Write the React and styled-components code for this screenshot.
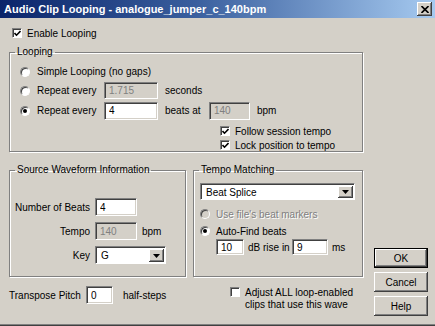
import styled, { createGlobalStyle } from "styled-components";

const GlobalStyle = createGlobalStyle`
  body {
    margin: 0;
    background: #d4d0c8;
    font-family: "Liberation Sans", Arial, sans-serif;
    font-size: 10px;
    color: #000;
  }
`;

const Window = styled.div`
  width: 435px;
  height: 326px;
  box-sizing: border-box;
  display: flex;
  flex-direction: column;
  background: #d4d0c8;
  border-bottom: 1px solid #404040;
  box-shadow: inset 0 -1px #808080;
`;

const TitleBar = styled.div`
  height: 18px;
  flex-shrink: 0;
  display: flex;
  align-items: center;
  padding: 0 3px 0 4px;
  background: linear-gradient(90deg, #0a246a 0%, #3a5f9e 45%, #a6caf0 100%);
`;

const TitleText = styled.div`
  flex: 1;
  color: #fff;
  font-weight: bold;
  font-size: 11px;
  white-space: nowrap;
`;

const raised = `
  background: #d4d0c8;
  border: none;
  box-shadow: inset -1px -1px #404040, inset 1px 1px #fff, inset -2px -2px #808080;
`;

const CloseButton = styled.div`
  ${raised}
  width: 15px;
  height: 14px;
  display: flex;
  align-items: center;
  justify-content: center;
`;

const Body = styled.div`
  flex: 1;
  display: flex;
  flex-direction: column;
  padding-left: 9px;
`;

const CheckRow = styled.label`
  display: flex;
  align-items: center;
  gap: 5px;
  height: ${(p) => p.$h || 14}px;
  margin: ${(p) => p.$m || "0"};
  white-space: nowrap;
`;

const Box = styled.span`
  width: 10px;
  height: 10px;
  flex-shrink: 0;
  box-sizing: border-box;
  background: #fff;
  border: 1px solid;
  border-color: #808080 #fff #fff #808080;
  box-shadow: inset 1px 1px #404040;
  display: flex;
  align-items: center;
  justify-content: center;
`;

const Radio = styled.span`
  width: 10px;
  height: 10px;
  flex-shrink: 0;
  box-sizing: border-box;
  border-radius: 50%;
  background: ${(p) => (p.$disabled ? "#d4d0c8" : "#fff")};
  border: 1px solid;
  border-color: #808080 #fff #fff #808080;
  box-shadow: inset 1px 1px #404040;
  display: flex;
  align-items: center;
  justify-content: center;
  &::after {
    content: "";
    display: ${(p) => (p.$checked ? "block" : "none")};
    width: 4px;
    height: 4px;
    border-radius: 50%;
    background: #000;
  }
`;

const Group = styled.fieldset`
  width: ${(p) => p.$w}px;
  height: ${(p) => p.$h}px;
  box-sizing: border-box;
  margin: ${(p) => p.$m || "0"};
  padding: 0;
  min-width: 0;
  border: 1px solid #808080;
  box-shadow: inset 1px 1px #fff, 1px 1px #fff;
`;

const Legend = styled.legend`
  margin-left: 5px;
  padding: 0 2px;
  line-height: 12px;
`;

const LoopBody = styled.div`
  display: flex;
  flex-direction: column;
  padding: 4px 0 0 10px;
`;

const Row = styled.div`
  display: flex;
  align-items: center;
  height: ${(p) => p.$h || 19}px;
  margin-top: ${(p) => p.$mt || 0}px;
  padding-left: ${(p) => p.$pl || 0}px;
  gap: ${(p) => p.$gap ?? 7}px;
  white-space: nowrap;
`;

const Label = styled.span`
  width: ${(p) => (p.$w ? `${p.$w}px` : "auto")};
  flex-shrink: 0;
  margin-left: ${(p) => p.$ml || 0}px;
  color: ${(p) => (p.$disabled ? "#808080" : "#000")};
  text-shadow: ${(p) => (p.$disabled ? "1px 1px #fff" : "none")};
`;

const TextBox = styled.input`
  width: ${(p) => p.$w}px;
  height: ${(p) => p.$h || 18}px;
  box-sizing: border-box;
  margin: 0;
  padding: 0 0 0 4px;
  font: inherit;
  color: ${(p) => (p.disabled ? "#808080" : "#000")};
  background: ${(p) => (p.disabled ? "#d4d0c8" : "#fff")};
  border: 1px solid;
  border-color: #808080 #fff #fff #808080;
  box-shadow: inset 1px 1px #404040, inset -1px -1px #d4d0c8;
  outline: none;
`;

const Select = styled.div`
  width: ${(p) => p.$w}px;
  height: ${(p) => p.$h || 18}px;
  box-sizing: border-box;
  display: flex;
  align-items: center;
  background: #fff;
  border: 1px solid;
  border-color: #808080 #fff #fff #808080;
  box-shadow: inset 1px 1px #404040;
  padding: 2px 1px 1px 5px;
  grid-column: ${(p) => p.$span || "auto"};
`;

const SelectValue = styled.span`
  flex: 1;
`;

const DropButton = styled.span`
  ${raised}
  width: 15px;
  height: 100%;
  display: flex;
  align-items: center;
  justify-content: center;
`;

const Lower = styled.div`
  flex: 1;
  display: flex;
  margin-top: 12px;
`;

const LeftCol = styled.div`
  width: 354px;
  display: flex;
  flex-direction: column;
`;

const GroupsRow = styled.div`
  display: flex;
  gap: 7px;
`;

const FormGrid = styled.div`
  display: grid;
  grid-template-columns: 80px 42px auto;
  grid-auto-rows: 18px;
  column-gap: 5px;
  row-gap: 6px;
  align-items: center;
  justify-items: start;
  padding-top: 22px;
`;

const GridLabel = styled.span`
  justify-self: end;
  white-space: nowrap;
`;

const TempoBody = styled.div`
  display: flex;
  flex-direction: column;
  padding: 7px 0 0 6px;
`;

const BottomRow = styled.div`
  display: flex;
  justify-content: space-between;
  margin-top: 9px;
`;

const PitchRow = styled.div`
  display: flex;
  align-items: center;
  height: 18px;
  white-space: nowrap;
`;

const AdjustBlock = styled.label`
  width: 133px;
  display: flex;
  align-items: flex-start;
  gap: 5px;
  line-height: 12px;
  padding-top: 1px;
`;

const ButtonCol = styled.div`
  display: flex;
  flex-direction: column;
  justify-content: flex-end;
  gap: 4px;
  margin: 0 0 9px 11px;
`;

const Button = styled.button`
  ${raised}
  width: 54px;
  height: 20px;
  box-sizing: border-box;
  font: inherit;
  padding: 0;
  color: #000;
  ${(p) =>
    p.$default &&
    `
    border: 1px solid #000;
    box-shadow: inset -1px -1px #404040, inset 1px 1px #fff, inset -2px -2px #808080;
  `}
`;

function Check() {
  return (
    <svg width="7" height="7" viewBox="0 0 7 7">
      <path d="M0.5 3 L2.5 5.2 L6.5 1" fill="none" stroke="#000" strokeWidth="1.6" />
    </svg>
  );
}

function CheckBox({ checked }) {
  return <Box>{checked && <Check />}</Box>;
}

function Arrow() {
  return (
    <svg width="7" height="4" viewBox="0 0 7 4">
      <path d="M0 0 H7 L3.5 4 Z" fill="#000" />
    </svg>
  );
}

export default function App() {
  return (
    <>
      <GlobalStyle />
      <Window>
        <TitleBar>
          <TitleText>Audio Clip Looping - analogue_jumper_c_140bpm</TitleText>
          <CloseButton>
            <svg width="8" height="7" viewBox="0 0 8 7">
              <path d="M0.5 0 L7.5 7 M7.5 0 L0.5 7" stroke="#000" strokeWidth="1.6" />
            </svg>
          </CloseButton>
        </TitleBar>
        <Body>
          <CheckRow $h={10} $m="10px 0 0 3px">
            <CheckBox checked />
            Enable Looping
          </CheckRow>

          <Group $w={354} $h={106} $m="8px 0 0 0">
            <Legend>Looping</Legend>
            <LoopBody>
              <Row>
                <Radio />
                <Label>Simple Looping (no gaps)</Label>
              </Row>
              <Row>
                <Radio />
                <Label $w={60}>Repeat every</Label>
                <TextBox $w={54} $h={17} disabled defaultValue="1.715" />
                <Label>seconds</Label>
              </Row>
              <Row $mt={1}>
                <Radio $checked />
                <Label $w={60}>Repeat every</Label>
                <TextBox $w={54} defaultValue="4" />
                <Label $w={37}>beats at</Label>
                <TextBox $w={41} disabled defaultValue="140" />
                <Label>bpm</Label>
              </Row>
              <CheckRow $m="4px 0 0 200px">
                <CheckBox checked />
                Follow session tempo
              </CheckRow>
              <CheckRow $m="0 0 0 200px">
                <CheckBox checked />
                Lock position to tempo
              </CheckRow>
            </LoopBody>
          </Group>

          <Lower>
            <LeftCol>
              <GroupsRow>
                <Group $w={177} $h={113}>
                  <Legend>Source Waveform Information</Legend>
                  <FormGrid>
                    <GridLabel>Number of Beats</GridLabel>
                    <TextBox $w={42} defaultValue="4" />
                    <span />
                    <GridLabel>Tempo</GridLabel>
                    <TextBox $w={42} disabled defaultValue="140" />
                    <span>bpm</span>
                    <GridLabel>Key</GridLabel>
                    <Select $w={71} $span="span 2">
                      <SelectValue>G</SelectValue>
                      <DropButton>
                        <Arrow />
                      </DropButton>
                    </Select>
                  </FormGrid>
                </Group>
                <Group $w={170} $h={113}>
                  <Legend>Tempo Matching</Legend>
                  <TempoBody>
                    <Select $w={155} $h={17}>
                      <SelectValue>Beat Splice</SelectValue>
                      <DropButton>
                        <Arrow />
                      </DropButton>
                    </Select>
                    <Row $h={14} $mt={7} $gap={6}>
                      <Radio $disabled />
                      <Label $disabled>Use file's beat markers</Label>
                    </Row>
                    <Row $h={14} $mt={3} $gap={6}>
                      <Radio $checked />
                      <Label>Auto-Find beats</Label>
                    </Row>
                    <Row $h={16} $mt={1} $gap={4} $pl={16}>
                      <TextBox $w={28} $h={16} defaultValue="10" />
                      <Label $w={40}>dB rise in</Label>
                      <TextBox $w={36} $h={16} defaultValue="9" />
                      <Label>ms</Label>
                    </Row>
                  </TempoBody>
                </Group>
              </GroupsRow>
              <BottomRow>
                <PitchRow>
                  <Label $w={77}>Transpose Pitch</Label>
                  <TextBox $w={27} defaultValue="0" />
                  <Label $ml={10}>half-steps</Label>
                </PitchRow>
                <AdjustBlock>
                  <CheckBox />
                  <span>
                    Adjust ALL loop-enabled
                    <br />
                    clips that use this wave
                  </span>
                </AdjustBlock>
              </BottomRow>
            </LeftCol>
            <ButtonCol>
              <Button $default>OK</Button>
              <Button>Cancel</Button>
              <Button>Help</Button>
            </ButtonCol>
          </Lower>
        </Body>
      </Window>
    </>
  );
}
